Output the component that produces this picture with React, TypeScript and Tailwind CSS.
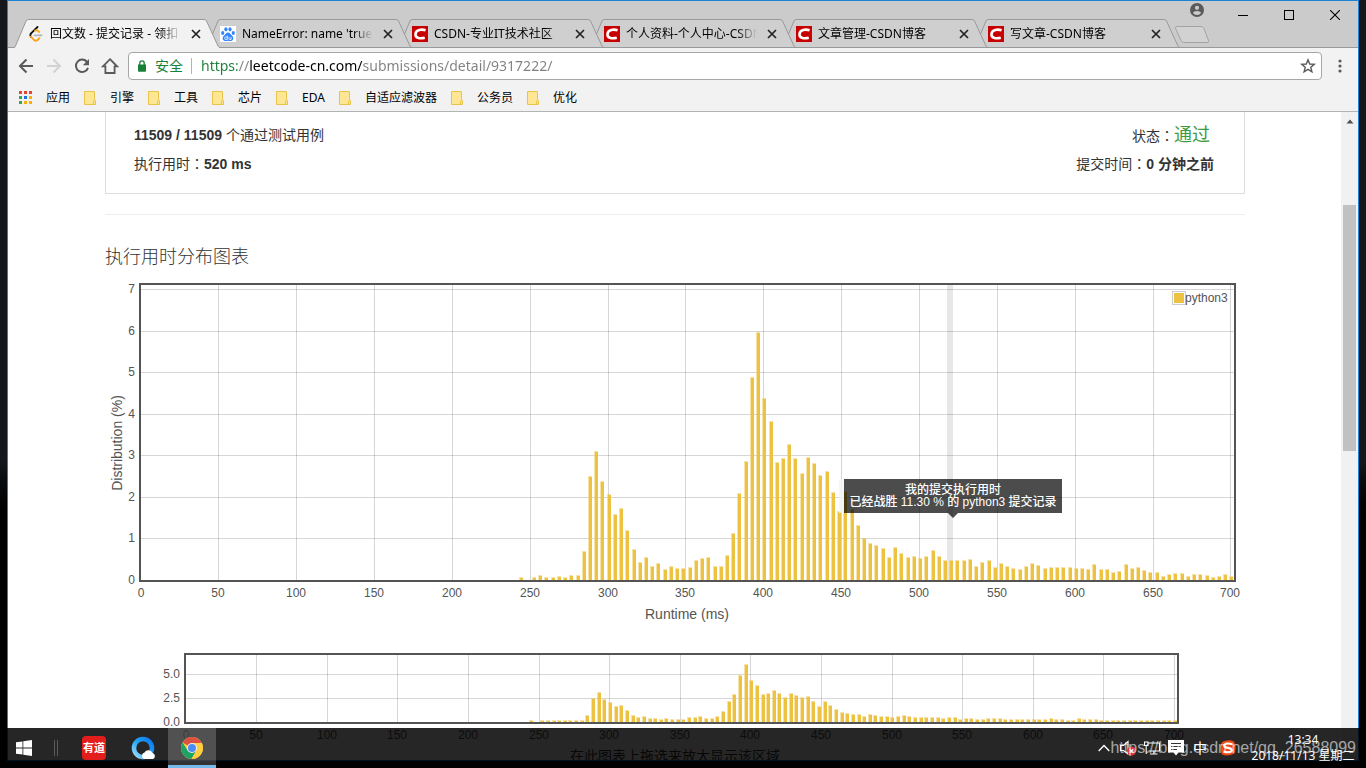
import React from "react";
import clsx from "clsx";

const tabs = [
  { title: "回文数 - 提交记录 - 领扣 LeetCode", icon: "leetcode", active: true },
  { title: "NameError: name 'true' is not", icon: "baidu" },
  { title: "CSDN-专业IT技术社区", icon: "csdn" },
  { title: "个人资料-个人中心-CSDN博客", icon: "csdn" },
  { title: "文章管理-CSDN博客", icon: "csdn" },
  { title: "写文章-CSDN博客", icon: "csdn" },
];

const bookmarks = ["引擎", "工具", "芯片", "EDA", "自适应滤波器", "公务员", "优化"];

// share of submissions (%) per 4 ms bucket, first bucket at 245 ms
const FIRST_BUCKET = 245;
const BUCKET = 4;
const distribution = [
  0.05, 0, 0.05, 0.1, 0.05, 0.06, 0.08, 0.06, 0.1, 0.1, 0.69, 2.48, 3.08, 2.36,
  2.06, 1.57, 1.71, 1.2, 0.72, 0.43, 0.53, 0.32, 0.39, 0.25, 0.32, 0.28, 0.27,
  0.3, 0.47, 0.51, 0.55, 0.32, 0.32, 0.59, 1.12, 2.09, 2.84, 4.87, 5.96, 4.36,
  3.81, 2.83, 2.92, 3.26, 2.92, 2.56, 2.94, 2.8, 2.51, 2.61, 2.11, 1.65, 2.13,
  1.7, 1.3, 1.0, 0.88, 0.82, 0.76, 0.54, 0.78, 0.63, 0.55, 0.56, 0.51, 0.56,
  0.7, 0.56, 0.47, 0.46, 0.46, 0.46, 0.5, 0.32, 0.42, 0.47, 0.29, 0.39, 0.32,
  0.27, 0.25, 0.32, 0.39, 0.35, 0.28, 0.31, 0.29, 0.29, 0.31, 0.27, 0.27, 0.24,
  0.37, 0.24, 0.24, 0.18, 0.2, 0.36, 0.27, 0.3, 0.22, 0.18, 0.18, 0.09, 0.14,
  0.15, 0.15, 0.08, 0.14, 0.12, 0.1, 0.06, 0.08, 0.14, 0.08,
];

const xTicks = Array.from({ length: 15 }, (_, i) => i * 50);

function Favicon({ name }: { name: string }) {
  if (name === "leetcode") {
    return (
      <svg viewBox="0 0 16 16" className="size-4 shrink-0" fill="none" strokeLinecap="round" strokeLinejoin="round">
        <path d="M9.5 1 L2.8 7.6" stroke="#111" strokeWidth="1.8" />
        <path d="M2.8 7.6 Q1.6 9.2 2.8 10.8" stroke="#111" strokeWidth="1.8" />
        <path d="M2.8 10.6 L6 14 Q7.8 15.4 9.6 14 L11.4 12.2" stroke="#ffa116" strokeWidth="1.8" />
        <path d="M11.2 6 L9.6 4.6 Q8.4 3.8 7 4.6" stroke="#ffa116" strokeWidth="1.8" />
        <path d="M6.5 9.3 H13.6" stroke="#b3b3b3" strokeWidth="1.7" />
      </svg>
    );
  }
  if (name === "baidu") {
    return (
      <svg viewBox="0 0 16 16" className="size-4 shrink-0">
        <rect width="16" height="16" fill="#fff" />
        <g fill="#3385ff">
          <ellipse cx="2.7" cy="7" rx="1.6" ry="2.1" />
          <ellipse cx="5.9" cy="3.3" rx="1.6" ry="2.1" />
          <ellipse cx="10" cy="3.3" rx="1.6" ry="2.1" />
          <ellipse cx="13.3" cy="7" rx="1.6" ry="2.1" />
          <path d="M8 6.6c2 0 2.6 2 4.1 3.2 1.6 1.3 1.8 4.6-.9 5.2-1.3.2-2-.2-3.2-.2s-2 .4-3.3.2c-2.6-.6-2.4-3.9-.8-5.2C5.500 8.600 6 6.600 8 6.600z" />
        </g>
        <path d="M7.3 9.5v4H5.9a1.2 1.2 0 010-2.5h1.4M9 11v1.7q0 .8.8.8h1.3V11" stroke="#fff" strokeWidth=".8" fill="none" />
      </svg>
    );
  }
  return (
    <svg viewBox="0 0 16 16" className="size-4 shrink-0">
      <rect width="16" height="16" fill="#c70000" />
      <path d="M13.600 4.300 C9.500 3 4 3.600 3.500 8 C3.200 12.500 8.500 12.700 12.800 11.700" fill="none" stroke="#fff" strokeWidth="2.600" />
    </svg>
  );
}

function Tab({ tab, order }: { tab: (typeof tabs)[number]; order: number }) {
  return (
    <div
      className={clsx("relative flex h-7 w-[206px] min-w-0 items-center pt-[2px] pr-4 pl-[14px]", order > 0 && "-ml-[14px]")}
      style={{ zIndex: tabs.length - order }}
    >
      <svg viewBox="0 0 206 28" preserveAspectRatio="none" className="absolute inset-0 h-full w-full overflow-visible">
        <path
          d="M0 28.5 Q1 28 1.500 27 L12 2 Q12.800 .5 14.500 .5 H190 Q191.700 .5 192.500 2 L204 27 Q204.500 28 206 28.5"
          fill={tab.active ? "#f2f2f2" : "#cfcfcf"}
          stroke="#999"
        />
        <path d="M1 28.5 H205" stroke={tab.active ? "#f2f2f2" : "#999"} />
      </svg>
      <button className="relative flex min-w-0 flex-1 items-center gap-[6px]">
        <Favicon name={tab.icon} />
        <span className="flex-1 overflow-hidden text-left text-xs whitespace-nowrap text-black [mask-image:linear-gradient(to_left,transparent,black_20px)]">
          {tab.title}
        </span>
      </button>
      <button aria-label="关闭标签页" className="relative ml-[7px] flex size-4 shrink-0 items-center justify-center">
        <svg viewBox="0 0 16 16" className="size-4" stroke="#222" strokeWidth="1.7">
          <path d="M4 4 L12 12 M12 4 L4 12" />
        </svg>
      </button>
    </div>
  );
}

function TitleBar() {
  return (
    <header className="relative flex h-[46px] shrink-0 items-end bg-[#cbcbcb] pl-[6px]">
      {tabs.map((tab, i) => (
        <Tab key={tab.title} tab={tab} order={i} />
      ))}
      <button aria-label="打开新的标签页" className="mb-[3px] -ml-[6px] h-[18px] w-9 shrink-0">
        <svg viewBox="0 0 36 18" className="h-[18px] w-9">
          <path d="M3 .5 H27 Q29 .5 30 2.5 L34.500 14.500 Q35 16.500 33 16.500 H10 Q8 16.500 7 14.500 L1.500 2.500 Q1 .5 3 .5z" fill="#d2d2d2" stroke="#a3a3a3" />
        </svg>
      </button>
      <div className="absolute top-0 right-0 flex">
        <button aria-label="用户" className="flex h-[18px] w-[46px] items-center justify-center">
          <svg viewBox="0 0 14 14" className="size-[14px]">
            <circle cx="7" cy="7" r="7" fill="#5a5a5a" />
            <circle cx="7" cy="4.8" r="2.1" fill="#cbcbcb" />
            <path d="M2.8 9.8 Q4 7.9 7 7.9 T11.2 9.8 Q9.8 12 7 12 T2.8 9.8z" fill="#cbcbcb" />
          </svg>
        </button>
        <button aria-label="最小化" className="flex h-7 w-[46px] items-center justify-center">
          <svg viewBox="0 0 10 10" className="size-[10px]"><path d="M0 5.5 H10" stroke="#000" /></svg>
        </button>
        <button aria-label="最大化" className="flex h-7 w-[46px] items-center justify-center">
          <svg viewBox="0 0 10 10" className="size-[10px]"><rect x=".5" y=".5" width="9" height="9" fill="none" stroke="#000" /></svg>
        </button>
        <button aria-label="关闭" className="flex h-7 w-[46px] items-center justify-center">
          <svg viewBox="0 0 10 10" className="size-[10px]"><path d="M0 0 L10 10 M10 0 L0 10" stroke="#000" strokeWidth="1.1" /></svg>
        </button>
      </div>
    </header>
  );
}

function Toolbar() {
  return (
    <div className="flex h-[37px] shrink-0 items-center border-t border-[#999] bg-[#f2f2f2] pl-1">
      <button aria-label="后退" className="flex w-7 justify-center">
        <svg viewBox="0 0 16 16" className="size-4" fill="none" stroke="#5a5a5a" strokeWidth="2">
          <path d="M15 8 H2.5 M8.5 1.5 L2 8 L8.5 14.5" />
        </svg>
      </button>
      <button aria-label="前进" className="flex w-7 justify-center">
        <svg viewBox="0 0 16 16" className="size-4" fill="none" stroke="#d2d2d2" strokeWidth="2">
          <path d="M1 8 H13.5 M7.5 1.5 L14 8 L7.5 14.5" />
        </svg>
      </button>
      <button aria-label="重新加载" className="flex w-7 justify-center">
        <svg viewBox="0 0 16 16" className="size-4" fill="none" stroke="#5a5a5a" strokeWidth="2">
          <path d="M13.2 4.2 A6.2 6.2 0 1 0 14 9.8" />
          <path d="M15 1 V7.2 H8.8z" fill="#5a5a5a" stroke="none" />
        </svg>
      </button>
      <button aria-label="主页" className="flex w-7 justify-center">
        <svg viewBox="0 0 18 18" className="size-[18px]" fill="none" stroke="#5a5a5a" strokeWidth="1.8">
          <path d="M9 2.2 L16 9.3 H13.6 V16 H4.4 V9.3 H2z" />
        </svg>
      </button>
      <div className="ml-1 flex h-7 min-w-0 flex-1 items-center rounded-sm border border-[#a6a6a6] bg-white">
        <svg viewBox="0 0 8 12" className="ml-[9px] h-3 w-2 shrink-0">
          <path d="M0 4.5 h8 V11 q0 .8-.8.8 H.8 Q0 11.8 0 11z" fill="#188038" />
          <path d="M1.8 5 V3 a2.2 2.2 0 014.4 0 V5" fill="none" stroke="#188038" strokeWidth="1.3" />
        </svg>
        <span className="ml-[9px] shrink-0 text-sm text-[#188038]">安全</span>
        <span className="mx-2 h-4 w-px shrink-0 bg-[#b4b4b4]" />
        <input
          aria-label="地址和搜索栏"
          defaultValue="https://leetcode-cn.com/submissions/detail/9317222/"
          className="ml-px min-w-0 flex-1 bg-[linear-gradient(to_right,#188038_36px,#808080_36px,#808080_49px,#000_49px,#000_161px,#808080_161px)] bg-clip-text text-sm text-transparent caret-black outline-none"
        />
        <button aria-label="为此网页添加书签" className="mr-[5px] flex size-4 shrink-0 items-center justify-center">
          <svg viewBox="0 0 16 16" className="size-4" fill="none" stroke="#5a5a5a" strokeWidth="1.4">
            <path d="M8 1.8 L9.7 6 L14.3 6.3 L10.8 9.3 L11.9 13.8 L8 11.3 L4.1 13.8 L5.2 9.3 L1.7 6.3 L6.3 6z" />
          </svg>
        </button>
      </div>
      <button aria-label="菜单" className="flex w-9 shrink-0 justify-center">
        <svg viewBox="0 0 4 14" className="h-[14px] w-1" fill="#5a5a5a">
          <circle cx="2" cy="2" r="1.6" />
          <circle cx="2" cy="7" r="1.6" />
          <circle cx="2" cy="12" r="1.6" />
        </svg>
      </button>
    </div>
  );
}

const appColors = ["#ea4335", "#ea4335", "#ea4335", "#34a853", "#1a73e8", "#fbae05", "#34a853", "#fbae05", "#fbae05"];

function BookmarksBar() {
  return (
    <nav className="flex h-7 shrink-0 items-center gap-[14px] border-b border-[#b3b3b3] bg-[#f2f2f2] pl-[11px] text-xs whitespace-nowrap text-black">
      <a href="#apps" className="flex items-center gap-[14px]">
        <svg viewBox="0 0 13 13" className="size-[13px]">
          {appColors.map((color, i) => (
            <rect key={i} x={(i % 3) * 5} y={Math.floor(i / 3) * 5} width="3" height="3" fill={color} />
          ))}
        </svg>
        应用
      </a>
      {bookmarks.map((name) => (
        <a key={name} href="#bookmark" className="flex items-center gap-[14px]">
          <svg viewBox="0 0 12 14" className="h-[14px] w-3">
            <path d="M.5 .5 H10.5 V9.5 H11.5 V13.5 H.5z" fill="#ffe694" stroke="#e8c54a" />
            <path d="M9.5 13 V10" stroke="#e8c54a" />
          </svg>
          {name}
        </a>
      ))}
    </nav>
  );
}

type PlotProps = {
  left: number;
  right: number;
  top: number;
  bottom: number;
  zero: number;
  msWidth: number;
  unitHeight: number;
  yTicks: number[];
  digits: number;
  labelY: number;
};

function Plot({ left, right, top, bottom, zero, msWidth, unitHeight, yTicks, digits, labelY }: PlotProps) {
  const px = (ms: number) => left + 1 + ms * msWidth;
  const py = (value: number) => zero - value * unitHeight;

  return (
    <g>
      {/* grid */}
      <g stroke="#545454" strokeOpacity="0.24">
        {xTicks.slice(1).map((ms) => (
          <path key={ms} d={`M${Math.floor(px(ms)) + 0.5} ${top} V${bottom}`} />
        ))}
        {yTicks.slice(1).map((v) => (
          <path key={v} d={`M${left} ${Math.floor(py(v)) + 0.5} H${right}`} />
        ))}
      </g>

      {/* bars */}
      {distribution.map((value, i) => {
        if (!value) return null;
        const x = Math.round(px(FIRST_BUCKET + i * BUCKET) - 2);
        const y = Math.min(Math.round(py(value)), bottom - 2);
        return (
          <g key={i} fill="#edc240">
            <rect x={x - 1} y={y - 1} width="4" height={bottom - y + 1} fillOpacity="0.45" />
            <rect x={x} y={y} width="3" height={bottom - y} />
          </g>
        );
      })}
      <rect x={left} y={top} width={right - left} height={bottom - top} fill="none" stroke="#545454" strokeWidth="2" />

      {/* tick labels */}
      <g fill="#545454" fontSize="12">
        {xTicks.map((ms) => (
          <text key={ms} x={Math.floor(px(ms))} y={labelY} textAnchor="middle">
            {ms}
          </text>
        ))}
        {yTicks.map((v) => (
          <text key={v} x={left - 5} y={Math.floor(py(v)) + 4} textAnchor="end">
            {v.toFixed(digits)}
          </text>
        ))}
      </g>
    </g>
  );
}

function RuntimeChart() {
  return (
    <svg viewBox="0 0 1140 352" className="block w-full font-['Liberation_Sans','Noto_Sans_CJK_SC',sans-serif]">
      <rect x="842" y="9" width="6" height="295" fill="#e7e7e7" />
      <Plot left={35} right={1130} top={8} bottom={305} zero={304.4} msWidth={1.557} unitHeight={41.55} yTicks={[0, 1, 2, 3, 4, 5, 6, 7]} digits={0} labelY={321} />
      <text x="582" y="343" textAnchor="middle" fontSize="14" fill="#545454">
        Runtime (ms)
      </text>
      <text x="17" y="167" textAnchor="middle" fontSize="14" fill="#545454" transform="rotate(-90 17 167)">
        Distribution (%)
      </text>

      {/* legend */}
      <rect x="1067.5" y="15.5" width="13" height="13" fill="#fff" stroke="#ccc" />
      <rect x="1069" y="17" width="10" height="10" fill="#edc240" />
      <text x="1080" y="26" fontSize="12" fill="#545454">
        python3
      </text>

      {/* own submission */}
      <rect x="734" y="203" width="5" height="34" fill="#f5f5f5" fillOpacity="0.85" />
      <path d="M739 203 H957 V237 H853 L848 242 L843 237 H739z" fill="#000" fillOpacity="0.7" />
      <g fill="#fff" fontSize="12" fontWeight="500" textAnchor="middle">
        <text x="848" y="218">我的提交执行用时</text>
        <text x="848" y="230">已经战胜 11.30 % 的 python3 提交记录</text>
      </g>
    </svg>
  );
}

function OverviewChart() {
  return (
    <svg viewBox="0 0 1140 96" className="block w-full font-['Liberation_Sans','Noto_Sans_CJK_SC',sans-serif]">
      <Plot left={80} right={1073} top={6} bottom={75} zero={74.5} msWidth={1.412} unitHeight={9.6} yTicks={[0, 2.5, 5]} digits={1} labelY={91} />
    </svg>
  );
}

// full-width colon set in the middle of its cell
function Colon() {
  return <span className="font-['Noto_Sans_CJK_TC',sans-serif]" lang="zh-TW">：</span>;
}

function SubmissionPage() {
  return (
    <main className="min-w-0 flex-1 overflow-hidden bg-white pr-24 pl-[97px] text-[#333]">
      <section className="flex justify-between border-x border-b border-[#ddd] pt-[9px] pr-[30px] pb-4 pl-7 text-sm leading-7 font-['Liberation_Sans','Noto_Sans_CJK_SC',sans-serif]">
        <div>
          <p className="h-7">
            <b>11509 / 11509</b> 个通过测试用例
          </p>
          <p className="h-7">
            执行用时<Colon />
            <b>520 ms</b>
          </p>
        </div>
        <div className="text-right">
          <p className="h-7 pr-1">
            状态<Colon />
            <span className="text-lg leading-none text-[#3c9b3c]">通过</span>
          </p>
          <p className="h-7">
            提交时间<Colon />
            <b>0 分钟之前</b>
          </p>
        </div>
      </section>
      <hr className="mt-5 border-[#eee]" />
      <h4 className="mt-[27px] mb-[6px] text-lg leading-7 font-light">执行用时分布图表</h4>
      <RuntimeChart />
      <div className="mt-5">
        <OverviewChart />
        <p className="text-center text-sm leading-6">在此图表上拖选来放大显示该区域</p>
      </div>
    </main>
  );
}

function Scrollbar() {
  return (
    <div className="flex w-[17px] shrink-0 flex-col items-center bg-[#f1f1f1]">
      <svg viewBox="0 0 16 18" className="h-[18px] w-4">
        <path d="M4.5 11.5 L8 7.5 L11.5 11.5z" fill="#505050" />
      </svg>
      <div className="mt-[75px] h-[246px] w-[13px] bg-[#c1c1c1]" />
    </div>
  );
}

function Taskbar() {
  return (
    <footer className="absolute inset-x-0 bottom-0 flex h-10 items-stretch bg-black/85 text-white">
      <button aria-label="开始" className="flex w-12 items-center justify-center">
        <svg viewBox="0 0 16 16" className="size-4" fill="#fff">
          <path d="M0 2.3 L6.5 1.4 V7.6 H0z M7.3 1.3 L16 0 V7.6 H7.3z M0 8.4 H6.5 V14.6 L0 13.7z M7.3 8.4 H16 V16 L7.3 14.7z" />
        </svg>
      </button>
      <div className="mr-3 flex w-[10px] items-center justify-end gap-[2px]">
        <span className="h-4 w-px bg-[#5a5a5a]" />
        <span className="h-4 w-px bg-[#5a5a5a]" />
      </div>
      <button aria-label="有道词典" className="flex w-12 items-center justify-center">
        <span className="flex size-6 items-center justify-center rounded-sm bg-[#e31c1c] text-[11px] font-bold whitespace-nowrap">有道</span>
      </button>
      <button aria-label="QQ浏览器" className="flex w-[50px] items-center justify-center">
        <svg viewBox="0 0 24 24" className="size-6">
          <defs>
            <linearGradient id="qq" x1="0" y1="1" x2="1" y2="0">
              <stop offset="0" stopColor="#9fe0ff" />
              <stop offset="0.5" stopColor="#22a4f5" />
              <stop offset="1" stopColor="#0c78f0" />
            </linearGradient>
          </defs>
          <circle cx="12" cy="12" r="9" fill="none" stroke="url(#qq)" strokeWidth="4.5" />
          <path d="M13 23 a3.5 3.5 0 01.5-6.5 a4.5 4.5 0 018 .5 a3.2 3.2 0 01.5 6z" fill="#fff" />
        </svg>
      </button>
      <button aria-label="Google Chrome" className="flex w-12 items-center justify-center border-b-[3px] border-[#76b9ed] bg-white/20 pt-[3px]">
        <svg viewBox="0 0 24 24" className="size-6">
          <circle cx="12" cy="12" r="11" fill="#ffcd40" />
          <path d="M12 12 L2.5 6.5 A11 11 0 0121.5 6.5 L21.8 7 H12z" fill="#dd5144" />
          <path d="M2.5 6.5 A11 11 0 0011.5 23 L16.3 14.5 L12 12 L7.7 14.5z" fill="#1da462" />
          <path d="M12 7 H21.8 A11 11 0 0111.5 23 L16.3 14.5z" fill="#ffcd40" />
          <circle cx="12" cy="12" r="5" fill="#f1f1f1" />
          <circle cx="12" cy="12" r="4" fill="#4c8bf5" />
        </svg>
      </button>

      <div className="mr-[10px] ml-auto flex items-center">
        <button aria-label="显示隐藏的图标" className="flex w-6 justify-center">
          <svg viewBox="0 0 12 8" className="h-2 w-3" fill="none" stroke="#fff" strokeWidth="1.4">
            <path d="M.7 7 L6 1.5 L11.3 7" />
          </svg>
        </button>
        <button aria-label="音量" className="flex w-6 justify-center">
          <svg viewBox="0 0 18 16" className="h-4 w-[18px]">
            <path d="M1.5 5.5 H4.5 L9 1.5 V14 L4.5 10.5 H1.5z" fill="none" stroke="#fff" strokeWidth="1.2" />
            <circle cx="12.5" cy="11" r="4.5" fill="#e0323c" />
            <path d="M10.7 9.2 L14.3 12.8 M14.3 9.2 L10.7 12.8" stroke="#fff" strokeWidth="1.3" />
          </svg>
        </button>
        <button aria-label="网络" className="flex w-6 justify-center">
          <svg viewBox="0 0 16 14" className="h-[14px] w-4" fill="none" stroke="#fff" strokeWidth="1.1">
            <path d="M4.5 2 H15.5 V10 H4.5 M9.8 10 V13 M6 13 H13.5 M.5 1 H4 V4.5 H.5z M2.2 4.5 V13" />
          </svg>
        </button>
        <button aria-label="操作中心" className="flex w-6 justify-center">
          <svg viewBox="0 0 16 16" className="size-4">
            <path d="M0 0 H16 V12.5 H10.5 L8 15.5 L5.5 12.5 H0z" fill="#fff" />
            <path d="M3 3.5 H13 M3 6.5 H13 M3 9.5 H9" stroke="#333" />
          </svg>
        </button>
        <button aria-label="输入法" className="w-6 text-center text-sm">中</button>
        <button aria-label="搜狗输入法" className="mr-[6px] flex w-8 justify-center">
          <svg viewBox="0 0 16 16" className="size-4">
            <path d="M2 2 Q8 -1 14 1.5 Q17 7 14.5 13.5 Q8 17 2 14.5 Q-1 8 2 2z" fill="#f04a14" />
            <path d="M12.5 4.3 Q5 2.3 4.2 5.3 Q4 7.2 8 7.9 Q12.5 8.8 11.7 10.8 Q10 13.2 3.5 11.6" fill="none" stroke="#fff" strokeWidth="2.2" />
          </svg>
        </button>
        <div className="w-[106px] text-center text-xs whitespace-nowrap">
          <p>13:34</p>
          <p>2018/11/13 星期二</p>
        </div>
      </div>
      <p className="absolute right-[10px] bottom-2 text-base leading-6 text-white/60 font-['Liberation_Sans',sans-serif]">
        https://blog.csdn.net/qq_26588099
      </p>
    </footer>
  );
}

export default function App() {
  return (
    <div className="relative flex h-screen flex-col overflow-hidden bg-linear-to-b from-[#14181c] from-60% to-black to-70% px-[7px] pb-[7px] font-['Noto_Sans','Noto_Sans_CJK_SC',sans-serif]">
      <div className="flex min-h-0 flex-1 flex-col border border-[#1883d7]">
        <TitleBar />
        <Toolbar />
        <BookmarksBar />
        <div className="flex min-h-0 flex-1">
          <SubmissionPage />
          <Scrollbar />
        </div>
      </div>
      <Taskbar />
    </div>
  );
}
